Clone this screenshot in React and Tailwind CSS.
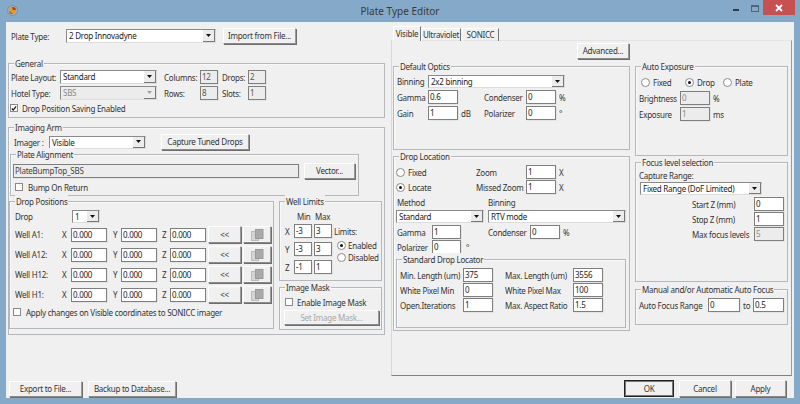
import React from "react";

const L = ({ c = "", children }) => (
  <span className={"inline-block shrink-0 whitespace-nowrap leading-[13px] " + c}>{children}</span>
);

const F = ({ c = "", v, dis }) => (
  <div
    className={
      "h-full shrink-0 overflow-hidden border border-[#7f7f7f] pl-[1px] leading-[11px] whitespace-nowrap shadow-[1px_1px_0_#e4e4e4] " +
      (dis ? "bg-[#ececec] text-[#8a8a8a] " : "bg-white text-[#222] ") +
      c
    }
  >
    {v}
  </div>
);

const Arrow = ({ dis }) => (
  <svg width="5" height="3" viewBox="0 0 5 3">
    <path d="M0 0h5L2.5 3z" fill={dis ? "#a0a0a0" : "#111"} />
  </svg>
);

const Sel = ({ c = "", v, dis }) => (
  <div
    className={
      "flex h-full shrink-0 items-stretch border border-t-[#8a8a8a] border-l-[#8a8a8a] border-r-[#dcdcdc] border-b-[#dcdcdc] " +
      (dis ? "bg-[#ececec] text-[#8a8a8a] " : "bg-white text-[#222] ") +
      c
    }
  >
    <div className="flex-1 overflow-hidden pl-[2px] leading-[11px] whitespace-nowrap">{v}</div>
    <div className="flex w-[12px] items-center justify-center border-b border-r border-b-[#777] border-r-[#777] bg-[#ececec]">
      <Arrow dis={dis} />
    </div>
  </div>
);

const Btn = ({ c = "", children, dis, def }) => (
  <div
    className={
      "flex shrink-0 items-center justify-center border whitespace-nowrap " +
      (def
        ? "border-[#222] bg-[#f0f0f0] shadow-[inset_0_0_0_1px_#777] "
        : "border-t-white border-l-white border-r-[#9a9a9a] border-b-[#8a8a8a] bg-[#f0f0f0] shadow-[1px_1px_0_#6e6e6e] ") +
      (dis ? "text-[#a8a8a8] " : "text-[#333] ") +
      c
    }
  >
    {children}
  </div>
);

const Chk = ({ on }) => (
  <div className="flex h-[8px] w-[8px] shrink-0 items-center justify-center border border-[#8a8a8a] bg-white">
    {on && (
      <svg width="7" height="7" viewBox="0 0 7 7">
        <path d="M1 3.5l1.6 1.8L6 1" fill="none" stroke="#111" strokeWidth="1.4" />
      </svg>
    )}
  </div>
);

const Rad = ({ on }) => (
  <div className="flex h-[9px] w-[9px] shrink-0 items-center justify-center rounded-full border border-[#8a8a8a] bg-white">
    {on && <div className="h-[3px] w-[3px] rounded-full bg-[#111]" />}
  </div>
);

const Group = ({ c = "", title, children }) => (
  <div className={"relative shrink-0 border border-[#b4b8bc] shadow-[inset_1px_1px_0_#fafafa] " + c}>
    <span className="absolute top-[-7px] left-[5px] bg-[#f0f0f0] px-[1px] leading-[13px] whitespace-nowrap text-[#333]">
      {title}
    </span>
    {children}
  </div>
);

const CopyIcon = () => (
  <svg width="13" height="12" viewBox="0 0 13 12">
    <rect x="0.5" y="2.5" width="7" height="9" fill="#d4d4d4" stroke="#bdbdbd" />
    <rect x="4.5" y="0.5" width="7.5" height="9" fill="#a9a9a9" stroke="#9a9a9a" />
  </svg>
);

const Row = ({ c = "", children }) => <div className={"flex shrink-0 items-center " + c}>{children}</div>;

const WellRow = ({ name }) => (
  <Row c="mt-[3px] h-[17px] pl-[5px]">
    <L c="w-[47px]">{name}</L>
    <L c="w-[9px]">X</L>
    <F c="h-[14px]! w-[36px]" v="0.000" />
    <L c="ml-[6px] w-[8px]">Y</L>
    <F c="h-[14px]! w-[36px]" v="0.000" />
    <L c="ml-[5px] w-[8px]">Z</L>
    <F c="h-[14px]! w-[36px]" v="0.000" />
    <Btn c="ml-[2px] h-[17px] w-[33px]">&lt;&lt;</Btn>
    <Btn c="ml-[2px] h-[17px] w-[28px]">
      <CopyIcon />
    </Btn>
  </Row>
);

const LimitRow = ({ a, min, max, c = "" }) => (
  <Row c={"h-[14px] pl-[5px] " + c}>
    <L c="w-[9px]">{a}</L>
    <F c="w-[18px]" v={min} />
    <F c="ml-[2px] w-[18px]" v={max} />
  </Row>
);

export default function App() {
  return (
    <div className="flex h-[404px] w-[800px] flex-col overflow-hidden bg-[#85a9c9] [font-family:'Liberation_Sans',Arial,sans-serif] text-[8px] tracking-[-0.25px] text-[#333]">
      {/* Title bar */}
      <div className="relative flex h-[22px] shrink-0 items-center justify-center text-[#3a3a3a]">
        <div className="absolute top-[5px] left-[7px] flex h-[11px] w-[11px] items-center justify-center rounded-full border border-[#7d8ea0] bg-[#9fb0c0]">
          <svg width="7" height="7" viewBox="0 0 7 7">
            <circle cx="3.5" cy="3.5" r="3.5" fill="#d8a02a" />
            <path d="M0 4a3.5 3.5 0 0 0 4 3z" fill="#b03a6a" />
            <path d="M3 0a3.5 3.5 0 0 1 4 3H4z" fill="#b5382a" />
          </svg>
        </div>
        <span className="[font-family:'Open_Sans',sans-serif] text-[10px] tracking-normal">Plate Type Editor</span>
        <div className="absolute top-0 right-[5px] flex items-start">
          <div className="mt-[9px] mr-[12px] h-[2px] w-[6px] bg-[#2f3d4a]" />
          <div className="mt-[5px] mr-[4px] h-[7px] w-[8px] border border-t-2 border-[#4d657d]" />
          <div className="flex h-[15px] w-[32px] items-center justify-center bg-[#c75050]">
            <svg width="8" height="8" viewBox="0 0 8 8">
              <path d="M1 1l6 6M7 1L1 7" stroke="#fff" strokeWidth="1.8" />
            </svg>
          </div>
        </div>
      </div>

      {/* Client */}
      <div className="mx-[6px] mb-[6px] flex flex-1 flex-col bg-[#f0f0f0]">
        <div className="flex h-[354px] shrink-0">
          {/* Left column */}
          <div className="ml-[2px] flex w-[377px] shrink-0 flex-col">
            <Row c="mt-[6px] h-[16px]">
              <L c="ml-[3px] w-[55px]">Plate Type:</L>
              <Sel c="h-[14px]! w-[150px]" v="2 Drop Innovadyne" />
              <Btn c="ml-[7px] h-[16px] w-[73px]">Import from File...</Btn>
            </Row>

            <Group c="mt-[19px] h-[55px]" title="General">
              <Row c="mt-[6px] h-[14px] pl-[2px]">
                <L c="w-[49px]">Plate Layout:</L>
                <Sel c="w-[97px]" v="Standard" />
                <L c="ml-[7px] w-[36px]">Columns:</L>
                <F c="w-[18px] bg-[#ececec]! text-[#555]!" v="12" />
                <L c="ml-[4px] w-[26px]">Drops:</L>
                <F c="w-[18px] bg-[#ececec]! text-[#555]!" v="2" />
              </Row>
              <Row c="mt-[2px] h-[14px] pl-[2px]">
                <L c="w-[49px]">Hotel Type:</L>
                <Sel c="w-[97px]" v="SBS" dis />
                <L c="ml-[7px] w-[36px]">Rows:</L>
                <F c="w-[18px] bg-[#ececec]! text-[#555]!" v="8" />
                <L c="ml-[4px] w-[26px]">Slots:</L>
                <F c="w-[18px] bg-[#ececec]! text-[#555]!" v="1" />
              </Row>
              <Row c="mt-[3px] h-[10px] pl-[1px]">
                <Chk on />
                <L c="ml-[4px]">Drop Position Saving Enabled</L>
              </Row>
            </Group>

            <Group c="mt-[9px] h-[208px]" title="Imaging Arm">
              <Row c="mt-[6px] h-[16px] pl-[5px]">
                <L c="w-[35px]">Imager :</L>
                <Sel c="h-[13px]! w-[97px]" v="Visible" />
                <Btn c="ml-[15px] h-[16px] w-[88px]">Capture Tuned Drops</Btn>
              </Row>

              <Group c="mt-[4px] ml-[1px] h-[42px] w-[349px]" title="Plate Alignment">
                <Row c="mt-[8px] h-[16px] pl-[2px]">
                  <F c="h-[14px]! w-[286px] bg-[#ececec]! text-[#444]!" v="PlateBumpTop_SBS" />
                  <Btn c="ml-[5px] h-[16px] w-[51px]">Vector...</Btn>
                </Row>
                <Row c="mt-[3px] h-[10px] pl-[4px]">
                  <Chk />
                  <L c="ml-[5px]">Bump On Return</L>
                </Row>
              </Group>

              <div className="mt-[5px] flex">
                <Group c="h-[128px] w-[265px]" title="Drop Positions">
                  <Row c="mt-[8px] h-[13px] pl-[5px]">
                    <L c="w-[57px]">Drop</L>
                    <Sel c="w-[28px]" v="1" />
                  </Row>
                  <WellRow name="Well A1:" />
                  <WellRow name="Well A12:" />
                  <WellRow name="Well H12:" />
                  <WellRow name="Well H1:" />
                  <Row c="mt-[4px] h-[10px] pl-[3px]">
                    <Chk />
                    <L c="ml-[5px]">Apply changes on Visible coordinates to SONICC imager</L>
                  </Row>
                </Group>

                <div className="ml-[5px] flex w-[103px] shrink-0 flex-col">
                  <Group c="h-[80px]" title="Well Limits">
                    <Row c="mt-[8px] h-[13px] pl-[17px]">
                      <L c="w-[18px]">Min</L>
                      <L>Max</L>
                    </Row>
                    <div className="relative">
                      <LimitRow a="X" min="-3" max="3" c="mt-[1px]" />
                      <LimitRow a="Y" min="-3" max="3" c="mt-[4px]" />
                      <LimitRow a="Z" min="-1" max="1" c="mt-[4px]" />
                      <div className="absolute top-[1px] left-[54px] flex flex-col">
                        <L>Limits:</L>
                        <Row c="mt-[1px] ml-[3px]">
                          <Rad on />
                          <L c="ml-[2px]">Enabled</L>
                        </Row>
                        <Row c="-mt-[1px] ml-[3px]">
                          <Rad />
                          <L c="ml-[2px]">Disabled</L>
                        </Row>
                      </div>
                    </div>
                  </Group>
                  <Group c="mt-[6px] h-[43px]" title="Image Mask">
                    <Row c="mt-[9px] h-[10px] pl-[5px]">
                      <Chk />
                      <L c="ml-[4px]">Enable Image Mask</L>
                    </Row>
                    <Btn c="mt-[3px] ml-[4px] h-[15px] w-[95px]" dis>
                      Set Image Mask...
                    </Btn>
                  </Group>
                </div>
              </div>
            </Group>
          </div>

          {/* Right column */}
          <div className="ml-[6px] flex w-[401px] shrink-0 flex-col">
            <div className="relative z-10 mt-[4px] ml-[2px] flex h-[15px] items-end">
              <div className="flex h-[15px] w-[28px] items-center justify-center border border-b-0 border-t-white border-l-white border-r-[#777] bg-[#f0f0f0] pb-[1px]">
                Visible
              </div>
              <div className="flex h-[13px] w-[40px] items-center justify-center border border-b-0 border-t-white border-l-white border-r-[#777]">
                Ultraviolet
              </div>
              <div className="ml-[1px] flex h-[13px] w-[37px] items-center justify-center border border-b-0 border-t-white border-l-white border-r-[#777]">
                SONICC
              </div>
            </div>
            <div className="-mt-[1px] h-[336px] shrink-0 border border-t-[#e4e4e4] border-l-[#d8d8d8] border-r-[#9a9a9a] border-b-[#808080]">
              <Btn c="mt-[2px] ml-[185px] h-[16px] w-[52px]">Advanced...</Btn>
              <div className="mt-[7px] ml-[1px] flex gap-[5px]">
                <div className="flex w-[237px] shrink-0 flex-col">
                  <Group c="h-[84px] shadow-[1px_1px_0_#a8a8a8]" title="Default Optics">
                    <Row c="mt-[8px] h-[13px] pl-[3px]">
                      <L c="w-[31px]">Binning</L>
                      <Sel c="w-[137px]" v="2x2 binning" />
                    </Row>
                    <Row c="mt-[2px] h-[14px] pl-[3px]">
                      <L c="w-[31px]">Gamma</L>
                      <F c="w-[30px]" v="0.6" />
                      <L c="w-[26px]"></L>
                      <L c="w-[42px]">Condenser</L>
                      <F c="w-[30px]" v="0" />
                      <L c="ml-[3px]">%</L>
                    </Row>
                    <Row c="mt-[2px] h-[14px] pl-[3px]">
                      <L c="w-[31px]">Gain</L>
                      <F c="w-[30px]" v="1" />
                      <L c="w-[26px] pl-[3px]">dB</L>
                      <L c="w-[42px]">Polarizer</L>
                      <F c="w-[30px]" v="0" />
                      <L c="ml-[3px]">°</L>
                    </Row>
                  </Group>

                  <Group c="mt-[6px] h-[175px] shadow-[1px_1px_0_#d0d0d0]" title="Drop Location">
                    <Row c="mt-[8px] h-[14px] pl-[2px]">
                      <div className="flex w-[80px] shrink-0 items-center">
                        <Rad />
                        <L c="ml-[3px]">Fixed</L>
                      </div>
                      <L c="w-[50px]">Zoom</L>
                      <F c="w-[30px]" v="1" />
                      <L c="ml-[3px]">X</L>
                    </Row>
                    <Row c="mt-[1px] h-[14px] pl-[2px]">
                      <div className="flex w-[80px] shrink-0 items-center">
                        <Rad on />
                        <L c="ml-[3px]">Locate</L>
                      </div>
                      <L c="w-[50px]">Missed Zoom</L>
                      <F c="w-[30px]" v="1" />
                      <L c="ml-[3px]">X</L>
                    </Row>
                    <Row c="mt-[2px] h-[13px] pl-[3px]">
                      <L c="w-[91px]">Method</L>
                      <L>Binning</L>
                    </Row>
                    <Row c="mt-[1px] h-[13px] pl-[2px]">
                      <Sel c="w-[88px]" v="Standard" />
                      <Sel c="ml-[4px] w-[138px]" v="RTV mode" />
                    </Row>
                    <Row c="mt-[2px] h-[14px] pl-[3px]">
                      <L c="w-[35px]">Gamma</L>
                      <F c="w-[29px]" v="1" />
                      <L c="w-[27px]"></L>
                      <L c="w-[42px]">Condenser</L>
                      <F c="w-[30px]" v="0" />
                      <L c="ml-[3px]">%</L>
                    </Row>
                    <Row c="mt-[1px] h-[14px] pl-[3px]">
                      <L c="w-[35px]">Polarizer</L>
                      <F c="w-[29px]" v="0" />
                      <L c="ml-[5px]">°</L>
                    </Row>
                    <Group c="mt-[5px] ml-[2px] h-[69px] w-[230px]" title="Standard Drop Locator">
                      <Row c="mt-[8px] h-[14px] pl-[3px]">
                        <L c="w-[63px]">Min. Length (um)</L>
                        <F c="w-[30px]" v="375" />
                        <L c="ml-[12px] w-[68px]">Max. Length (um)</L>
                        <F c="w-[30px]" v="3556" />
                      </Row>
                      <Row c="mt-[1px] h-[14px] pl-[3px]">
                        <L c="w-[63px]">White Pixel Min</L>
                        <F c="w-[30px]" v="0" />
                        <L c="ml-[12px] w-[68px]">White Pixel Max</L>
                        <F c="w-[30px]" v="100" />
                      </Row>
                      <Row c="mt-[1px] h-[14px] pl-[3px]">
                        <L c="w-[63px]">Open.Iterations</L>
                        <F c="w-[30px]" v="1" />
                        <L c="ml-[12px] w-[68px]">Max. Aspect Ratio</L>
                        <F c="w-[30px]" v="1.5" />
                      </Row>
                    </Group>
                  </Group>
                </div>

                <div className="flex w-[153px] shrink-0 flex-col">
                  <Group c="h-[90px]" title="Auto Exposure">
                    <Row c="mt-[9px] h-[13px] pl-[5px]">
                      <div className="flex w-[44px] shrink-0 items-center">
                        <Rad />
                        <L c="ml-[3px]">Fixed</L>
                      </div>
                      <div className="flex w-[38px] shrink-0 items-center">
                        <Rad on />
                        <L c="ml-[3px]">Drop</L>
                      </div>
                      <Rad />
                      <L c="ml-[3px]">Plate</L>
                    </Row>
                    <Row c="mt-[2px] h-[14px] pl-[3px]">
                      <L c="w-[41px]">Brightness</L>
                      <F c="w-[30px]" v="0" dis />
                      <L c="ml-[3px]">%</L>
                    </Row>
                    <Row c="mt-[2px] h-[14px] pl-[3px]">
                      <L c="w-[41px]">Exposure</L>
                      <F c="w-[30px]" v="1" dis />
                      <L c="ml-[3px]">ms</L>
                    </Row>
                  </Group>

                  <Group c="mt-[6px] h-[120px]" title="Focus level selection">
                    <Row c="mt-[6px] h-[13px] pl-[3px]">
                      <L>Capture Range:</L>
                    </Row>
                    <Row c="h-[13px] pl-[4px]">
                      <Sel c="w-[122px]" v="Fixed Range (DoF Limited)" />
                    </Row>
                    <Row c="mt-[2px] h-[14px] pl-[56px]">
                      <L c="w-[62px]">Start Z (mm)</L>
                      <F c="w-[30px]" v="0" />
                    </Row>
                    <Row c="mt-[1px] h-[14px] pl-[56px]">
                      <L c="w-[62px]">Stop Z (mm)</L>
                      <F c="w-[30px]" v="1" />
                    </Row>
                    <Row c="mt-[1px] h-[14px] pl-[56px]">
                      <L c="w-[62px]">Max focus levels</L>
                      <F c="w-[30px]" v="5" dis />
                    </Row>
                  </Group>

                  <Group c="mt-[7px] h-[36px]" title="Manual and/or Automatic Auto Focus">
                    <Row c="mt-[8px] h-[14px] pl-[3px]">
                      <L c="w-[69px]">Auto Focus Range</L>
                      <F c="w-[32px]" v="0" />
                      <L c="ml-[3px] w-[10px]">to</L>
                      <F c="w-[31px]" v="0.5" />
                    </Row>
                  </Group>
                </div>
              </div>
            </div>
          </div>
        </div>

        {/* Bottom buttons */}
        <Row c="mt-[4px] h-[17px]">
          <Btn c="ml-[3px] h-[16px] w-[73px]">Export to File...</Btn>
          <Btn c="ml-[6px] h-[16px] w-[88px]">Backup to Database...</Btn>
          <Btn c="ml-[448px] h-[17px] w-[50px]" def>
            OK
          </Btn>
          <Btn c="ml-[5px] h-[17px] w-[52px]">Cancel</Btn>
          <Btn c="ml-[4px] h-[17px] w-[51px]">Apply</Btn>
        </Row>
      </div>
    </div>
  );
}
